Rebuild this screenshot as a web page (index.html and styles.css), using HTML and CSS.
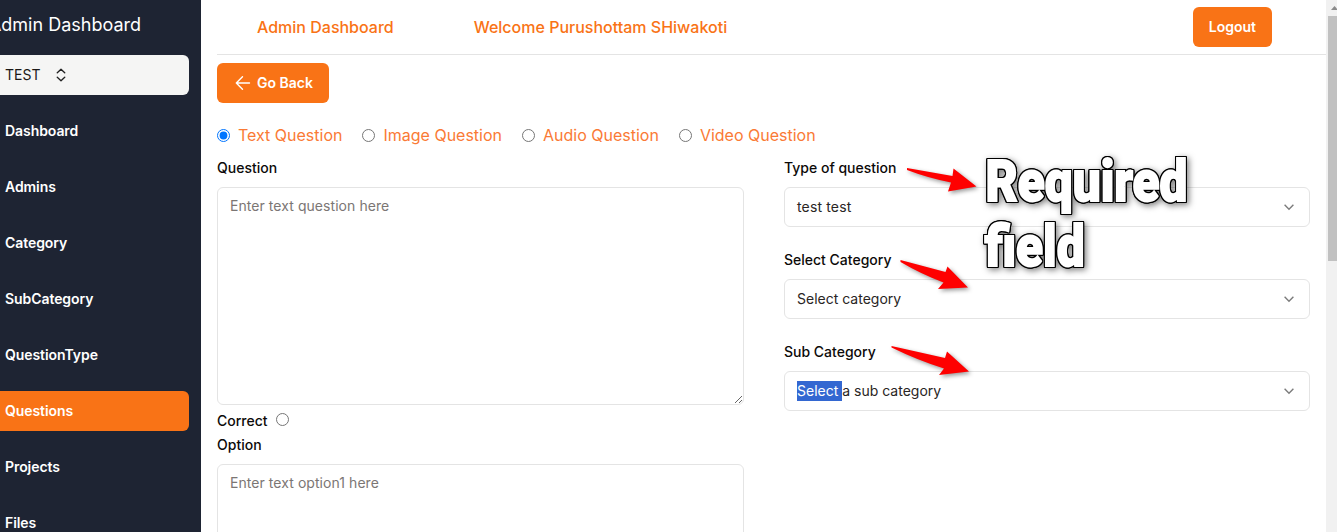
FILE: index.html
```html
<!DOCTYPE html>
<html lang="en">
<head>
<meta charset="utf-8">
<title>Admin Dashboard</title>
<link rel="stylesheet" href="styles.css">
</head>
<body>
<div class="app">
  <aside class="sidebar">
    <div class="brand"><span>Admin Dashboard</span></div>
    <button class="switcher"><span>TEST</span>
      <svg width="16" height="16" viewBox="0 0 15 15" fill="none" stroke="#222" stroke-width="1.3" stroke-linecap="round" stroke-linejoin="round"><path d="M4 5.400 7.500 2.200l3.500 3.200M4 9.600l3.500 3.200 3.500-3.200"/></svg>
    </button>
    <nav class="nav">
      <a>Dashboard</a>
      <a>Admins</a>
      <a>Category</a>
      <a>SubCategory</a>
      <a>QuestionType</a>
      <a class="active">Questions</a>
      <a>Projects</a>
      <a>Files</a>
    </nav>
  </aside>
  <main class="main">
    <header class="topbar">
      <span class="top-title">Admin Dashboard</span>
      <span class="top-welcome">Welcome Purushottam SHiwakoti</span>
      <button class="btn logout">Logout</button>
    </header>
    <button class="btn back">
      <svg width="20" height="20" viewBox="0 0 20 20" fill="none" stroke="#fff" stroke-width="1.4" stroke-linecap="round" stroke-linejoin="round"><path d="M16.5 10H3.3M9.500 3.700 3.300 10l6.200 6.300"/></svg>
      <span>Go Back</span>
    </button>
    <div class="kinds">
      <label><input type="radio" name="kind" checked><span>Text Question</span></label>
      <label><input type="radio" name="kind"><span>Image Question</span></label>
      <label><input type="radio" name="kind"><span>Audio Question</span></label>
      <label><input type="radio" name="kind"><span>Video Question</span></label>
    </div>
    <div class="columns">
      <section class="col">
        <div class="label">Question</div>
        <textarea class="area question" placeholder="Enter text question here"></textarea>
        <label class="correct"><span>Correct</span><input type="radio" name="correct"></label>
        <div class="label option">Option</div>
        <textarea class="area" placeholder="Enter text option1 here"></textarea>
      </section>
      <section class="col">
        <div class="field">
          <div class="label">Type of question</div>
          <div class="select"><span class="wide">test test</span><svg width="16" height="16" viewBox="0 0 16 16" fill="none" stroke="#7b7b7b" stroke-width="1.4"><path d="m3.600 5.800 4.400 4.400 4.400-4.400"/></svg></div>
        </div>
        <div class="field">
          <div class="label">Select Category</div>
          <div class="select"><span>Select category</span><svg width="16" height="16" viewBox="0 0 16 16" fill="none" stroke="#7b7b7b" stroke-width="1.4"><path d="m3.600 5.800 4.400 4.400 4.400-4.400"/></svg></div>
        </div>
        <div class="field">
          <div class="label">Sub Category</div>
          <div class="select"><span><mark>Select </mark>a sub category</span><svg width="16" height="16" viewBox="0 0 16 16" fill="none" stroke="#7b7b7b" stroke-width="1.4"><path d="m3.600 5.800 4.400 4.400 4.400-4.400"/></svg></div>
        </div>
      </section>
    </div>
  </main>
  <div class="scrollbar">
    <svg width="11" height="16" viewBox="0 0 11 16"><path d="M5 10 8.500 6l3.500 4z" fill="#8b8b8b"/></svg>
    <div class="thumb"></div>
  </div>
</div>
<svg class="notes" width="1337" height="532" viewBox="0 0 1337 532">
  <g class="arrows">
    <path d="M907 168 952.500 176 953.500 168.500 976.500 186.500 948 191.500 951 182.500Q928 178 907 170Z"/>
    <path d="M900.500 260 945.500 272 947.500 266.500 968 287.500 938 289 943.500 282.500Q921 274 900.500 262Z"/>
    <path d="M891.500 346 945 358 947 351.500 969 371.500 939 375 944 368.500Q917 360 891.500 347.500Z"/>
  </g>
  <g class="callout">
    <text x="985.500" y="200.500" textLength="202" lengthAdjust="spacingAndGlyphs">Required</text>
    <text x="984.500" y="265.500" textLength="100" lengthAdjust="spacingAndGlyphs">field</text>
  </g>
</svg>
</body>
</html>
```
FILE: styles.css
```css
* { box-sizing: border-box; }
body {
  margin: 0;
  height: 532px;
  overflow: hidden;
  background: #fff;
  color: #0c0a09;
  font: 14px/20px Inter, "Liberation Sans", sans-serif;
}
button, textarea { font: inherit; border: 0; }
.app { display: flex; height: 532px; overflow: hidden; }

.sidebar {
  width: 201px;
  flex: none;
  padding-right: 12px;
  background: #1e2433;
  color: #fff;
  overflow: hidden;
}
.brand {
  display: flex;
  justify-content: flex-end;
  height: 55px;
  padding: 11px 48px 0 0;
  font-size: 18px;
  line-height: 28px;
  white-space: nowrap;
}
.switcher {
  display: flex;
  align-items: center;
  gap: 13px;
  width: 100%;
  height: 40px;
  padding: 0 5px;
  border-radius: 0 6px 6px 0;
  background: #f5f5f4;
  color: #1c1917;
}
.nav { display: flex; flex-direction: column; gap: 16px; padding-top: 16px; }
.nav a {
  height: 40px;
  padding: 10px 5px;
  border-radius: 0 6px 6px 0;
  font-weight: 600;
  letter-spacing: -.07px;
}
.nav .active { background: #f97316; }

.main { flex: 1; min-width: 0; padding-left: 16px; }
.topbar {
  display: flex;
  align-items: center;
  height: 55px;
  padding: 0 54px 0 40px;
  border-bottom: 1px solid #e4e4e4;
  color: #f97316;
  font-size: 16px;
  font-weight: 500;
}
.top-welcome { margin-left: 80px; }
.btn {
  display: flex;
  align-items: center;
  height: 40px;
  padding: 0 16px;
  border-radius: 6px;
  background: #f97316;
  color: #fff;
  font-size: 14px;
  font-weight: 600;
}
.logout { margin-left: auto; }
.back { gap: 4px; margin-top: 8px; }
.kinds {
  display: flex;
  gap: 20px;
  height: 24px;
  margin-top: 20px;
  color: #fa7a35;
  font-size: 16px;
  line-height: 24px;
  white-space: nowrap;
}
.kinds label { display: flex; align-items: center; gap: 8px; }
input { width: 13px; height: 13px; margin: 0; }
.columns {
  display: grid;
  grid-template-columns: 527px 526px;
  column-gap: 40px;
  padding-top: 11px;
}
.label { height: 29px; font-weight: 450; }
.area {
  display: block;
  width: 100%;
  height: 80px;
  padding: 8px 12px;
  border: 1px solid #e4e4e4;
  border-radius: 6px;
  background: #fff;
  letter-spacing: .06px;
}
.area::placeholder { color: #7b7674; }
.question { height: 218px; }
.correct { display: flex; gap: 8.5px; height: 24px; padding-top: 6px; font-weight: 450; }
.correct input { margin-top: 2px; }
.option { margin-top: 6px; }
.field { height: 92px; }
.select {
  display: flex;
  align-items: center;
  justify-content: space-between;
  height: 40px;
  padding: 0 12px;
  border: 1px solid #e4e4e4;
  border-radius: 6px;
  color: #292524;
}
.wide { letter-spacing: .15px; }
mark { display: inline-block; white-space: pre; background: #3367d1; color: #fff; }

.scrollbar { width: 11px; flex: none; background: #f1f1f1; }
.scrollbar svg { display: block; }
.thumb { height: 245px; margin-left: 2px; background: #c1c1c1; }

.notes { position: absolute; top: 0; left: 0; pointer-events: none; }
.arrows { fill: #fe0000; filter: drop-shadow(2px 2px 2px rgba(0, 0, 0, .4)); }
.callout {
  fill: #fff;
  stroke: #fff;
  stroke-width: 1.8px;
  stroke-linejoin: miter;
  font: 900 58px Roboto, Inter, sans-serif;
  filter: drop-shadow(1px 0 0 #000) drop-shadow(-1px 0 0 #000) drop-shadow(0 1px 0 #000) drop-shadow(0 -1px 0 #000) drop-shadow(2px 2px 3px rgba(0, 0, 0, .5));
}
```
